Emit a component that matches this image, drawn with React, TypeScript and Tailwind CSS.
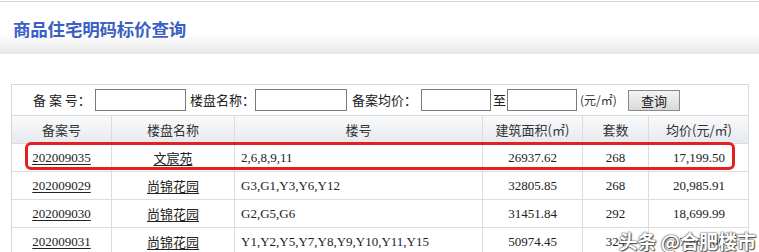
const ROWS = [
  { id: "202009035", name: "文宸苑", bld: "2,6,8,9,11", area: "26937.62", units: "268", price: "17,199.50" },
  { id: "202009029", name: "尚锦花园", bld: "G3,G1,Y3,Y6,Y12", area: "32805.85", units: "268", price: "20,985.91" },
  { id: "202009030", name: "尚锦花园", bld: "G2,G5,G6", area: "31451.84", units: "292", price: "18,699.99" },
  { id: "202009031", name: "尚锦花园", bld: "Y1,Y2,Y5,Y7,Y8,Y9,Y10,Y11,Y15", area: "50974.45", units: "324", price: "17,860.00" },
];

const COLS = "grid grid-cols-[100px_123px_248px_100px_66px_100px]";
const CELL = "flex items-center justify-center border-r border-[#dcdcdc] last:border-r-0";

function Field({ w }: { w: string }) {
  return <div className={`${w} h-[22px] shrink-0 border border-[#7b7b7b] bg-white`} />;
}

export default function App() {
  return (
    <div className="relative h-[252px] w-[759px] overflow-hidden bg-white pt-px font-['Liberation_Serif','Noto_Sans_CJK_SC',serif] text-[13px] text-[#222]">
      <div className="flex h-[53px] items-center border-t border-[#d5d5d5] bg-[linear-gradient(to_bottom,#ffffff_62%,#e7e7e7)] pl-[13px] pt-[3px]">
        <h1 className="font-['Noto_Sans_CJK_SC',sans-serif] text-[17.5px] font-bold tracking-[-0.2px] text-[#3b60c4]">
          商品住宅明码标价查询
        </h1>
      </div>

      <div className="ml-[11px] mt-[30px] w-[738px] border-l border-t border-[#d6d6d6]">
        <div className="flex h-[31px] items-center border-b border-r border-[#dcdcdc] pl-[21px] font-['Noto_Sans_CJK_SC',sans-serif] text-[#222]">
          <span className="w-[62px] shrink-0 whitespace-nowrap">备 案 号：</span>
          <Field w="w-[91px]" />
          <span className="ml-[4px] w-[65px] shrink-0 whitespace-nowrap">楼盘名称：</span>
          <Field w="w-[92px]" />
          <span className="ml-[5px] w-[69px] shrink-0 whitespace-nowrap">备案均价：</span>
          <Field w="w-[70px]" />
          <span className="w-[16px] shrink-0 pl-[2px]">至</span>
          <Field w="w-[70px]" />
          <span className="ml-[3px] w-[48px] shrink-0 whitespace-nowrap text-[12px] text-[#333]">(元/㎡)</span>
          <button
            type="button"
            className="h-[21px] w-[52px] shrink-0 border border-[#8a8a8a] bg-[linear-gradient(to_bottom,#f4f4f4,#d9d9d9)] text-[13px] leading-none text-[#222]"
          >
            查询
          </button>
        </div>

        <div className={`${COLS} h-[28px] border-b border-r border-[#dcdcdc] bg-[linear-gradient(to_bottom,#f9fafb,#e6e9ee)] font-['Noto_Sans_CJK_SC',sans-serif] text-[#333]`}>
          <div className={CELL}>备案号</div>
          <div className={CELL}>楼盘名称</div>
          <div className={CELL}>楼号</div>
          <div className={CELL}>建筑面积(㎡)</div>
          <div className={CELL}>套数</div>
          <div className={CELL}>均价(元/㎡)</div>
        </div>

        {ROWS.map((r) => (
          <div key={r.id} className={`${COLS} h-[28px] border-b border-r border-[#dcdcdc]`}>
            <div className={CELL}>
              <a className="underline underline-offset-2">{r.id}</a>
            </div>
            <div className={CELL}>
              <a className="font-['Noto_Sans_CJK_SC',sans-serif] underline underline-offset-2">{r.name}</a>
            </div>
            <div className={`${CELL} justify-start! pl-[6px]`}>{r.bld}</div>
            <div className={CELL}>{r.area}</div>
            <div className={CELL}>{r.units}</div>
            <div className={CELL}>{r.price}</div>
          </div>
        ))}
      </div>

      <div className="absolute left-[25px] top-[142px] h-[28px] w-[710px] rounded-[6px] border-[3px] border-[#e3201f]" />

      <div className="absolute bottom-[2px] right-[3px] font-['Noto_Sans_CJK_SC',sans-serif] text-[19px] font-bold leading-none text-white [text-shadow:0_0_1px_#444,0_0_2px_#444,1px_1px_1px_#555]">
        头条 @合肥楼市
      </div>
    </div>
  );
}
